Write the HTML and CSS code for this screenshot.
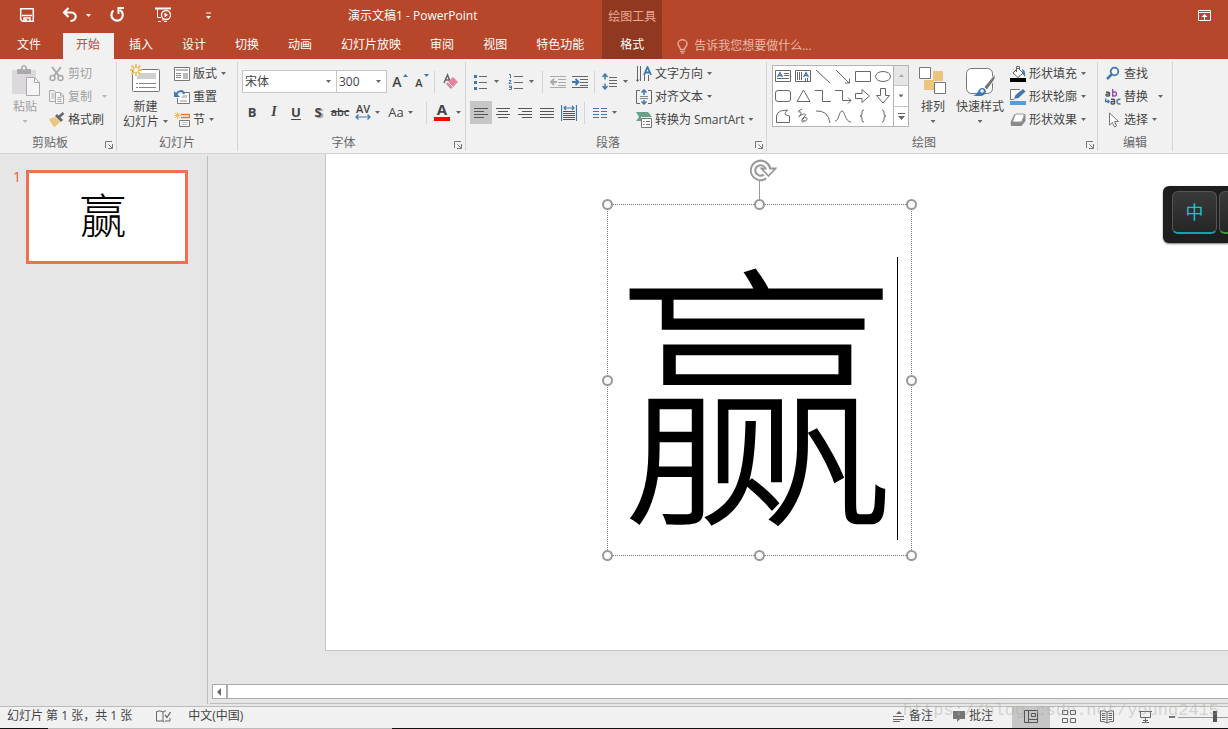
FILE: index.html
```html
<!DOCTYPE html>
<html lang="zh-CN">
<head>
<meta charset="utf-8">
<title>演示文稿1 - PowerPoint</title>
<link rel="stylesheet" href="styles.css">
</head>
<body>
<header class="top">
  <div class="top-main">
    <div class="titlebar">
      <button class="qat save" aria-label="保存"><svg width="16" height="16" viewBox="0 0 16 16"><path d="M1.700 1.700h12.600v12.600H3.500l-1.800-1.800z" fill="none" stroke="#fff" stroke-width="1.500"/><path d="M3 8.500h10M5 15v-4h6v4" fill="none" stroke="#fff" stroke-width="1.500"/><path d="M6 12h2v3H6z" fill="#fff"/></svg></button>
      <button class="qat undo" aria-label="撤消"><svg width="16" height="16" viewBox="0 0 16 16"><path d="M6.500 1L2 5.500 6.500 10M2 5.500h7.500c6 .5 5.500 8-1 8.500" fill="none" stroke="#fff" stroke-width="2.200"/></svg></button>
      <button class="qat undo-more" aria-label="撤消列表"><svg width="5" height="3"><path d="M0 0h5L2.500 3z" fill="#fff"/></svg></button>
      <button class="qat redo" aria-label="重复"><svg width="16" height="16" viewBox="0 0 16 16"><path d="M4.500 3.500A5.700 5.700 0 1 0 11 3" fill="none" stroke="#fff" stroke-width="2.200"/><path d="M9.500 7V1H15" fill="none" stroke="#fff" stroke-width="2"/></svg></button>
      <button class="qat show" aria-label="放映"><svg width="17" height="16" viewBox="0 0 17 16"><path d="M0 1.500h16" stroke="#fff" stroke-width="2"/><path d="M2.500 2v8.500H6M8 11v3M3 14.500h3M9 14.500h3" fill="none" stroke="#fff"/><circle cx="11" cy="8" r="4.500" fill="none" stroke="#fff" stroke-width="1.300"/><path d="M9.500 5.500L13 8l-3.500 2.500z" fill="#fff"/></svg></button>
      <button class="qat custom" aria-label="自定义"><svg width="5" height="7"><path d="M0 1h5" stroke="#fff"/><path d="M0 4h5L2.500 7z" fill="#fff"/></svg></button>
      <h1 class="title">演示文稿1 - PowerPoint</h1>
    </div>
    <nav class="tabs">
      <button class="tab file">文件</button>
      <button class="tab active">开始</button>
      <button class="tab">插入</button>
      <button class="tab">设计</button>
      <button class="tab">切换</button>
      <button class="tab">动画</button>
      <button class="tab">幻灯片放映</button>
      <button class="tab">审阅</button>
      <button class="tab">视图</button>
      <button class="tab">特色功能</button>
    </nav>
  </div>
  <div class="context">
    <span class="context-name">绘图工具</span>
    <button class="tab">格式</button>
  </div>
  <div class="top-right">
    <button class="ribbon-toggle" aria-label="功能区显示选项"><svg width="13" height="11" viewBox="0 0 13 11"><path d="M.5.5h12v10H.5zM1 2.500h11M6.500 10V5" fill="none" stroke="#fff"/><path d="M3.500 7L6.500 4l3 3z" fill="#fff"/></svg></button>
    <button class="tellme"><svg width="11" height="15" viewBox="0 0 11 15"><path d="M3.500 10.500C3.500 8 1 7.500 1 4.800a4.500 4 0 0 1 9 0C10 7.500 7.500 8 7.500 10.500z" fill="none" stroke="#e6a898" stroke-width="1.500"/><path d="M3 12.500h5M4 14.200h3" stroke="#e6a898" stroke-width="1.200"/></svg><span>告诉我您想要做什么...</span></button>
  </div>
</header>

<section class="ribbon">
  <div class="group g-clip">
    <div class="tools">
      <button class="big paste off"><svg width="32" height="33" viewBox="-2 0 32 33"><path d="M1 5h24v24H1z" fill="#dcd8dc"/><path d="M6 4h4V2q3-4 6 0v2h4v5H6z" fill="#aaa"/><circle cx="13" cy="3" r="1.500" fill="#f1f1f1"/><path d="M15.500 12.500h8l5 5v13h-13z" fill="#f6f4f6" stroke="#aaa"/><path d="M23.500 12.500v5h5" fill="none" stroke="#aaa"/></svg><span>粘贴</span><i class="caret"></i></button>
      <div class="stack">
        <button class="small off"><svg width="16" height="16" viewBox="0 0 16 16"><path d="M3 1l7.500 9.500M12 1L4.500 10.500" stroke="#aaa" stroke-width="2"/><circle cx="3.500" cy="12" r="2.500" fill="none" stroke="#aaa" stroke-width="1.500"/><circle cx="11.500" cy="12" r="2.500" fill="none" stroke="#aaa" stroke-width="1.500"/></svg><span>剪切</span></button>
        <button class="small off wide-caret"><svg width="16" height="16" viewBox="0 0 16 16"><path d="M6 12.500H.5v-11H5l3 3M2.500 5h3M2.500 7h3M2.500 9h3" fill="none" stroke="#aaa"/><path d="M6.500 3.500h5l3 3v8h-8z" fill="#f6f4f6" stroke="#aaa"/><path d="M8.500 8.500h4M8.500 10.500h4M8.500 12.500h4M11.500 4v3h3" fill="none" stroke="#aaa"/></svg><span>复制</span><i class="caret"></i></button>
        <button class="small"><svg width="16" height="16" viewBox="0 0 16 16"><path d="M0 7l6-2 5 5-5 5q-3-1-6-8z" fill="#ecc57f"/><path d="M6 4l2-2 6 6-2 2z" fill="#666"/><path d="M10 5l4.500-4" stroke="#666" stroke-width="2.500"/></svg><span>格式刷</span></button>
      </div>
    </div>
    <div class="caption"><span>剪贴板</span><button class="launch" aria-label="剪贴板选项"><svg width="8" height="8"><path d="M.5 7V.5H7M3.500 3.500L7 7M7.500 3v4.500H3" fill="none" stroke="#777"/></svg></button></div>
  </div>

  <div class="group g-slides">
    <div class="tools">
      <button class="big"><svg width="32" height="31" viewBox="1 0 32 31"><rect x="3.500" y="5.500" width="27" height="22" rx="1" fill="#fff" stroke="#777"/><path d="M12 9h15v6H8v-3z" fill="#d0d0d0"/><path d="M7 19.500h2M10 19.500h17M7 23.500h2M10 23.500h17" stroke="#888"/><path d="M7 0v12M1 6h12M2.500 1.500l9 9M11.500 1.500l-9 9" stroke="#eabf68" stroke-width="1.800"/><circle cx="7" cy="6" r="2" fill="#fff"/></svg><span>新建</span><span class="with-caret">幻灯片<i class="caret"></i></span></button>
      <div class="stack">
        <button class="small"><svg width="16" height="16" viewBox="0 0 16 16"><path d="M.5 1.500h15v13H.5z" fill="#fff" stroke="#777"/><path d="M2 3h12v2H2zM9 7h5v6H9z" fill="#bbb"/><path d="M2 7.500h5M2 9.500h5M2 11.500h5" stroke="#888"/></svg><span>版式</span><i class="caret"></i></button>
        <button class="small"><svg width="16" height="16" viewBox="0 0 16 16"><path d="M9 3.500h6.500v11h-12V9" fill="#fff" stroke="#777"/><path d="M9 6h4v3H7zM6 11h7v2H6z" fill="#c8c8c8"/><path d="M2 6c2-5 7-5 8-1" fill="none" stroke="#3f78b0" stroke-width="2"/><path d="M0 2v6h6z" fill="#3f78b0"/></svg><span>重置</span></button>
        <button class="small"><svg width="16" height="16" viewBox="0 0 16 16"><path d="M7 2.500h8.500M7 5.500h8.500v-3" fill="none" stroke="#e07b39" stroke-width="1.500"/><path d="M5.500 8.500h10v6h-10z" fill="#fff" stroke="#777"/><path d="M7.500 10.500h6M7.500 12.500h6" stroke="#bbb"/><path d="M3.500 0v7M0 3.500h7M1 1l5 5M6 1L1 6" stroke="#eabf68"/></svg><span>节</span><i class="caret"></i></button>
      </div>
    </div>
    <div class="caption"><span>幻灯片</span></div>
  </div>

  <div class="group g-font">
    <div class="tools rows">
      <div class="row">
        <label class="combo name"><select aria-label="字体"><option>宋体</option></select><i class="caret"></i></label>
        <label class="combo size"><select aria-label="字号"><option>300</option></select><i class="caret"></i></label>
        <button class="ico grow" aria-label="增大字号"><span>A</span><svg width="5" height="3"><path d="M0 3h5L2.500 0z" fill="#3f78b0"/></svg></button>
        <button class="ico shrink" aria-label="减小字号"><span>A</span><svg width="5" height="3"><path d="M0 0h5L2.500 3z" fill="#3f78b0"/></svg></button>
        <i class="bar"></i>
        <button class="ico eraser" aria-label="清除格式"><svg width="16" height="18" viewBox="0 0 16 18"><path d="M1 10L4.500 2 7 8M2.500 7H6" fill="none" stroke="#666" stroke-width="1.500"/><path d="M10 4l5 5-7 7-5-5z" fill="#e8849a"/><path d="M5 9l5 5" stroke="#f1f1f1"/></svg></button>
      </div>
      <div class="row format">
        <button class="ico b">B</button>
        <button class="ico i">I</button>
        <button class="ico u">U</button>
        <button class="ico s">S</button>
        <button class="ico strike">abc</button>
        <button class="ico av" aria-label="字符间距"><span>AV</span><svg width="16" height="6" viewBox="0 0 16 6"><path d="M1 3h14M3.500.5L1 3l2.500 2.500M12.500.5L15 3l-2.500 2.500" fill="none" stroke="#3f78b0" stroke-width="1.200"/></svg></button>
        <i class="caret"></i>
        <button class="ico aa">Aa</button>
        <i class="caret"></i>
        <i class="bar"></i>
        <button class="ico color" aria-label="字体颜色"><span>A</span></button>
        <i class="caret"></i>
      </div>
    </div>
    <div class="caption"><span>字体</span><button class="launch" aria-label="字体选项"><svg width="8" height="8"><path d="M.5 7V.5H7M3.500 3.500L7 7M7.500 3v4.500H3" fill="none" stroke="#777"/></svg></button></div>
  </div>

  <div class="group g-para">
    <div class="tools">
      <div class="rows">
        <div class="row lists">
          <button class="ico" aria-label="项目符号"><svg width="16" height="16" viewBox="0 0 16 16"><path d="M6 2.500h8M6 8.500h8M6 14.500h8" stroke="#666"/><path d="M1 1h3v3H1zM1 7h3v3H1zM1 13h3v3H1z" fill="#3f78b0"/></svg></button><i class="caret"></i>
          <button class="ico" aria-label="编号"><svg width="16" height="16" viewBox="0 0 16 16"><path d="M6 2.500h9M6 8.500h9M6 14.500h9" stroke="#666"/><path d="M1 .5h1.500v3.500M1 6.500h2L1 9.500h2.500M1 12h2.500v1.500H1.500 3.500v2H1" fill="none" stroke="#3f78b0"/></svg></button><i class="caret"></i>
          <i class="bar"></i>
          <button class="ico" aria-label="减少缩进"><svg width="17" height="14" viewBox="0 0 17 14"><path d="M0 1.500h16M8 4.500h8M8 7.500h8M0 12.500h16M8 10.500h8" stroke="#aaa"/><path d="M1 7h6M4 4L1 7l3 3" fill="none" stroke="#aaa" stroke-width="1.800"/></svg></button>
          <button class="ico" aria-label="增加缩进"><svg width="17" height="14" viewBox="0 0 17 14"><path d="M0 1.500h16M8 4.500h8M8 7.500h8M0 12.500h16M8 10.500h8" stroke="#666"/><path d="M0 7h6M3.500 4l3 3-3 3" fill="none" stroke="#3f78b0" stroke-width="1.800"/></svg></button>
          <i class="bar"></i>
          <button class="ico" aria-label="行距"><svg width="16" height="17" viewBox="0 0 16 17"><path d="M7 4.500h8M7 7.500h8M7 10.500h8M7 13.500h8" stroke="#666"/><path d="M3 1.500v5M.5 4L3 1l2.500 3M3 15.500v-5M.5 13L3 16l2.500-3" fill="none" stroke="#3f78b0" stroke-width="1.500"/></svg></button><i class="caret"></i>
        </div>
        <div class="row aligns">
          <button class="ico on" aria-label="左对齐"><svg width="14" height="12"><path d="M0 1.500h14M0 4.500h10M0 7.500h14M0 10.500h10" stroke="#555"/></svg></button>
          <button class="ico" aria-label="居中"><svg width="14" height="12"><path d="M0 1.500h14M2 4.500h10M0 7.500h14M2 10.500h10" stroke="#555"/></svg></button>
          <button class="ico" aria-label="右对齐"><svg width="14" height="12"><path d="M0 1.500h14M4 4.500h10M0 7.500h14M4 10.500h10" stroke="#555"/></svg></button>
          <button class="ico" aria-label="两端对齐"><svg width="14" height="12"><path d="M0 1.500h14M0 4.500h14M0 7.500h14M0 10.500h14" stroke="#555"/></svg></button>
          <button class="ico" aria-label="分散对齐"><svg width="16" height="16" viewBox="0 0 16 16"><path d="M.5 0v16M15.500 0v16M3 3h10M5 1L3 3l2 2M11 1l2 2-2 2" fill="none" stroke="#3f78b0" stroke-width="1.200"/><path d="M2 6.500h12M2 8.500h12M2 10.500h12M2 12.500h12M2 14.500h12" stroke="#555"/></svg></button>
          <i class="bar"></i>
          <button class="ico" aria-label="分栏"><svg width="14" height="12"><path d="M0 1.500h6M0 4.500h6M0 7.500h6M0 10.500h6M8 1.500h6M8 4.500h6M8 7.500h6M8 10.500h6" stroke="#3f78b0"/></svg></button><i class="caret"></i>
        </div>
      </div>
      <div class="stack">
        <button class="small"><svg width="16" height="16" viewBox="0 0 16 16"><path d="M1.500 0v15M4.500 0v15M8.500 9v6M12.500 9v6M0 13.500l1.500 2 1.500-2" fill="none" stroke="#666"/><path d="M8 9l3.500-8L15 9M9 6.500h5" fill="none" stroke="#3f78b0" stroke-width="1.800"/></svg><span>文字方向</span><i class="caret"></i></button>
        <button class="small"><svg width="16" height="16" viewBox="0 0 16 16"><path d="M4 1.500H.5v13H4M12 1.500h3.500v13H12" fill="none" stroke="#666"/><path d="M4 7.500h8M4 9.500h8" stroke="#888"/><path d="M8 1v5M5.500 3.500L8 1l2.500 2.500M8 15v-4M5.500 12.500L8 15l2.500-2.500" fill="none" stroke="#3f78b0" stroke-width="1.500"/></svg><span>对齐文本</span><i class="caret"></i></button>
        <button class="small"><svg width="16" height="16" viewBox="0 0 16 16"><path d="M0 0h12l4 5H5v4H0l3-4z" fill="#69a28c"/><path d="M5.500 6.500h10v9h-10z" fill="#fff" stroke="#777"/><path d="M7 9.500h1.500M10 9.500h4M7 12.500h1.500M10 12.500h4" stroke="#777"/></svg><span>转换为 SmartArt</span><i class="caret"></i></button>
      </div>
    </div>
    <div class="caption"><span>段落</span><button class="launch" aria-label="段落选项"><svg width="8" height="8"><path d="M.5 7V.5H7M3.500 3.500L7 7M7.500 3v4.500H3" fill="none" stroke="#777"/></svg></button></div>
  </div>

  <div class="group g-draw">
    <div class="tools">
      <div class="gallery">
        <div class="shapes">
          <button aria-label="文本框"><svg viewBox="0 0 20 20"><path d="M2.500 4.500h15v11h-15zM11 7.500h5M11 9.500h5M4 12.500h12"/><path class="blue" d="M4.500 11L7 6.500 9.500 11M5.500 9.500h3"/></svg></button>
          <button aria-label="竖排文本框"><svg viewBox="0 0 20 20"><path d="M2.500 4.500h15v11h-15zM4.500 6v8M6.500 6v8M8.500 6v8M12.500 12v3M14.500 12v3"/><path class="blue" d="M10.500 11L13 6.500l2.500 4.500M11.500 9.500h3"/></svg></button>
          <button aria-label="直线"><svg viewBox="0 0 20 20"><path d="M3 4l14 13"/></svg></button>
          <button aria-label="箭头"><svg viewBox="0 0 20 20"><path d="M3 4l13 13M16.500 12.500v4.500H12"/></svg></button>
          <button aria-label="矩形"><svg viewBox="0 0 20 20"><path d="M2.500 5.500h15v10h-15z"/></svg></button>
          <button aria-label="椭圆"><svg viewBox="0 0 20 20"><ellipse cx="10" cy="10.500" rx="7.500" ry="5"/></svg></button>
          <button aria-label="圆角矩形"><svg viewBox="0 0 20 20"><rect x="2.500" y="4.500" width="15" height="11" rx="2.500"/></svg></button>
          <button aria-label="三角形"><svg viewBox="0 0 20 20"><path d="M4 15.500h13L10.500 4z"/></svg></button>
          <button aria-label="肘形连接符"><svg viewBox="0 0 20 20"><path d="M2 4.500h7.500v11H18"/></svg></button>
          <button aria-label="肘形箭头"><svg viewBox="0 0 20 20"><path d="M2 4.500h7.500v10H18M15 11.500l3 3-3 3"/></svg></button>
          <button aria-label="右箭头"><svg viewBox="0 0 20 20"><path d="M2.500 7.500H9V3.500l7.500 6.500L9 16.500v-4H2.500z"/></svg></button>
          <button aria-label="下箭头"><svg viewBox="0 0 20 20"><path d="M7.500 2.500v7H3.500L10 17l6.500-7.500h-4v-7z"/></svg></button>
          <button aria-label="任意多边形"><svg viewBox="0 0 20 20"><path d="M3.500 16.500V10q0-3 4-5l7-1q-5 5 0 5.500l2 .5v6.500z"/></svg></button>
          <button aria-label="自由曲线"><svg viewBox="0 0 20 20"><path d="M9 3c-9 5 1 1-1 5s-4 3 0 1 6-1 3 2-1 3 0 4-3 2-2-1 6-3 5-1-1 3-3 1"/></svg></button>
          <button aria-label="弧形"><svg viewBox="0 0 20 20"><path d="M3 5q12-1 14 12"/></svg></button>
          <button aria-label="曲线"><svg viewBox="0 0 20 20"><path d="M2 15c4 0 4-10 7-10s3 11 9 11"/></svg></button>
          <button aria-label="左大括号"><svg viewBox="0 0 20 20"><path d="M11 4q-2 0-2 2v2q0 2-2 2 2 0 2 2v2q0 2 2 2"/></svg></button>
          <button aria-label="右大括号"><svg viewBox="0 0 20 20"><path d="M9 4q2 0 2 2v2q0 2 2 2-2 0-2 2v2q0 2-2 2"/></svg></button>
        </div>
        <div class="scroller">
          <button class="dim" aria-label="上一行"><svg width="5" height="3"><path d="M0 3h5L2.500 0z" fill="#aaa"/></svg></button>
          <button aria-label="下一行"><i class="caret"></i></button>
          <button aria-label="其他"><svg width="7" height="7"><path d="M0 .5h7" stroke="#666"/><path d="M0 3h7L3.500 7z" fill="#666"/></svg></button>
        </div>
      </div>
      <button class="big arrange"><svg width="28" height="33" viewBox="0 0 28 33"><path d="M14 6h10v10H14zM5 15h10v10H5z" fill="#ecc57f"/><path d="M.5 2.500h11v11H.5zM15.500 17.500h11v11h-11z" fill="#fff" stroke="#777"/></svg><span>排列</span><i class="caret"></i></button>
      <button class="big quick"><svg width="30" height="33" viewBox="-1 0 30 33"><rect x=".5" y="3.500" width="26" height="25" rx="5" fill="#fff" stroke="#777"/><path d="M29 9L18 22l3 3 8-11z" fill="#777" stroke="#f1f1f1"/><path d="M7 31c5-1 5-8 9-8 6 0 5 8-2 8z" fill="#3f78b0"/><circle cx="16" cy="26" r="1.800" fill="#fff"/></svg><span>快速样式</span><i class="caret"></i></button>
      <div class="stack">
        <button class="small"><svg width="16" height="16" viewBox="0 0 16 16"><path d="M3 7l5-5 5 5-5 4.500z" fill="#fff" stroke="#666"/><path d="M6.500 6V.5h3V4" fill="none" stroke="#666"/><path d="M12 3q4 1 3 8l-2-3z" fill="#3f78b0"/><path d="M0 12h16v4H0z"/></svg><span>形状填充</span><i class="caret"></i></button>
        <button class="small"><svg width="16" height="16" viewBox="0 0 16 16"><path d="M10 .5H.5v10H4" fill="#fff" stroke="#777"/><path d="M4 10l1.500-4L13 0l2.500 2.500-7 6.500z" fill="#3f78b0"/><path d="M0 12h16v4H0z" fill="#5b9bd5"/></svg><span>形状轮廓</span><i class="caret"></i></button>
        <button class="small"><svg width="16" height="16" viewBox="0 0 16 16"><path d="M1 9L4 3q.5-1 2-1h8q2 0 1.500 2v5l-4 5H2q-2 0-1-5z" fill="#8a8a8a"/><path d="M6 2h7q2 0 1 2l-2 5q-.5 1-2 1H4q-2 0-1-2l2-5z" fill="#fff" stroke="#999"/></svg><span>形状效果</span><i class="caret"></i></button>
      </div>
    </div>
    <div class="caption"><span>绘图</span><button class="launch" aria-label="绘图选项"><svg width="8" height="8"><path d="M.5 7V.5H7M3.500 3.500L7 7M7.500 3v4.500H3" fill="none" stroke="#777"/></svg></button></div>
  </div>

  <div class="group g-edit">
    <div class="tools">
      <div class="stack">
        <button class="small"><svg width="16" height="16" viewBox="0 0 16 16"><circle cx="9.500" cy="5.500" r="3.800" fill="#fff" stroke="#3f78b0" stroke-width="1.800"/><path d="M6.500 8.500L2 13" stroke="#3f78b0" stroke-width="2.500"/></svg><span>查找</span></button>
        <button class="small wide-caret"><svg width="16" height="16" viewBox="0 0 16 16" fill="none" stroke="#555" stroke-width="1.400"><path d="M1 3.200h2.500q1 0 1 1V7M4.500 5H2.500Q1 5 1 6t1.200 1H4.500"/><path d="M7.700 0v7h1.800q2 0 2-2t-2-2H7.700" stroke="#8c50b0"/><path d="M6 10.200h2.500q1 0 1 1V15M9.500 12.500h-2q-1.500 0-1.500 1.200T7.200 15h2.300"/><path d="M15.500 10.200h-1.200q-2.300 0-2.300 2.400t2.300 2.400h1.200M.7 9.500v3h3.500M2.700 11l1.500 1.500L2.700 14" stroke="#3f78b0"/></svg><span>替换</span><i class="caret"></i></button>
        <button class="small"><svg width="16" height="16" viewBox="0 0 16 16"><path d="M4.500 1v12l3-2.500 2 4.500 2-1-2-4.500h4z" fill="#fff" stroke="#777"/></svg><span>选择</span><i class="caret"></i></button>
      </div>
    </div>
    <div class="caption"><span>编辑</span></div>
  </div>
</section>

<main class="work">
  <aside class="thumbs">
    <span class="num">1</span>
    <button class="thumb" aria-label="幻灯片 1">赢</button>
  </aside>
  <section class="editor">
    <div class="stage">
      <div class="slide">
        <div class="textbox">
          <span class="word">赢</span><i class="cursor"></i>
          <i class="stem"></i>
          <svg class="rotate" width="28" height="24" viewBox="0 0 28 24"><path d="M15 18.500A7.500 7.500 0 1 1 18 11" fill="none" stroke="#999" stroke-width="6.500"/><path d="M11.500 10.500h14l-7 7.500z" fill="#fff" stroke="#999" stroke-width="1.800"/><path d="M15 18.500A7.500 7.500 0 1 1 18 12" fill="none" stroke="#fff" stroke-width="2.500"/></svg>
          <i class="handle nw"></i><i class="handle n"></i><i class="handle ne"></i>
          <i class="handle w"></i><i class="handle e"></i>
          <i class="handle sw"></i><i class="handle s"></i><i class="handle se"></i>
        </div>
      </div>
    </div>
    <div class="hscroll"><button aria-label="向左滚动"><svg width="4" height="8"><path d="M4 0v8L0 4z" fill="#666"/></svg></button><div class="track"></div></div>
  </section>
  <div class="ime"><span class="key">中</span><span class="key next"></span></div>
</main>

<footer class="status">
  <span>幻灯片 第 1 张，共 1 张</span>
  <button class="spell" aria-label="拼写检查"><svg width="15" height="13" viewBox="0 0 15 13"><path d="M7 11.500V2Q4 0 .5 1.500v9.500h6.500l1 1.500M7 2q1-1 3-1M14 8v3H9" fill="none" stroke="#666"/><path d="M9 5l2 2.500L14.500 2" fill="none" stroke="#666" stroke-width="1.300"/></svg></button>
  <button>中文(中国)</button>
  <div class="views">
    <button class="notes"><svg width="12" height="12" viewBox="0 0 12 12"><path d="M3 4h6L6 1z" fill="#666"/><path d="M0 6.500h11M0 9.500h11M0 11.500h7" stroke="#666"/></svg><span>备注</span></button>
    <button class="comments"><svg width="12" height="12" viewBox="0 0 12 12"><path d="M0 1h12v8H7l-3 3V9H0z" fill="#777"/></svg><span>批注</span></button>
    <button class="view on" aria-label="普通视图"><svg width="15" height="13" viewBox="0 0 15 13"><path d="M.5.500h13v12H.5zM4.500 1v11M5 9.500h9M7.500 3.500h4v3h-4z" fill="none" stroke="#555"/></svg></button>
    <button class="view" aria-label="浏览视图"><svg width="15" height="13" viewBox="0 0 15 13"><path d="M.5.500h5v4h-5zM8.500.500h5v4h-5zM.5 8.500h5v4h-5zM8.500 8.500h5v4h-5z" fill="none" stroke="#666"/></svg></button>
    <button class="view" aria-label="阅读视图"><svg width="15" height="14" viewBox="0 0 15 14"><path d="M7 2Q4 0 .5 1v10.500Q4 11 7 13q3-2 6.500-1.500V1Q10 0 7 2v11M2 3.500h3.500M2 5.500h3.500M2 7.500h3.500M2 9.500h3.500M8.500 3.500H12M8.500 5.500H12M8.500 7.500H12M8.500 9.500H12" fill="none" stroke="#666"/></svg></button>
    <button class="view" aria-label="幻灯片放映"><svg width="13" height="13" viewBox="0 0 13 13"><path d="M0 1.500h13M1.500 2v5.500h10V2M6.500 8v4M3 12.500h7M4 10.500h5" fill="none" stroke="#666"/></svg></button>
    <button class="minus" aria-label="缩小"></button>
    <input class="zoom" type="range" aria-label="缩放" value="100">
  </div>
  <span class="watermark">https://blog.csdn.net/young2415</span>
</footer>
<div class="edge"></div>
</body>
</html>
```

FILE: styles.css
```css
* { box-sizing: border-box; }
body {
  margin: 0;
  height: 100vh;
  display: flex;
  flex-direction: column;
  overflow: hidden;
  background: #e6e6e6;
  color: #444;
  font: 12px/16px "Open Sans", "Noto Sans CJK SC", sans-serif;
}
button {
  margin: 0;
  padding: 0;
  border: 0;
  background: none;
  color: inherit;
  font: inherit;
  white-space: nowrap;
}
svg { display: block; flex: none; }
i { font-style: normal; }

.caret {
  flex: none;
  display: block;
  width: 5px;
  height: 3px;
  background: #666;
  clip-path: polygon(0 0, 100% 0, 50% 100%);
}

/* title and tabs */
.top { display: flex; height: 59px; background: #b7472a; color: #fff; }
.top-main { display: flex; flex-direction: column; padding-right: 4px; }
.titlebar { display: flex; align-items: center; height: 33px; padding: 0 0 3px 19px; }
.undo { margin-left: 27px; }
.undo-more { margin-left: 8px; }
.redo { margin-left: 18px; }
.show { margin-left: 30px; }
.custom { margin-left: 34px; }
.title { margin: 0 0 0 137px; padding-top: 2px; font-size: 12px; font-weight: 400; }
.tabs { display: flex; gap: 1px; height: 26px; }
.tab { height: 26px; padding: 0 14px 3px; }
.file { padding: 0 21px 3px 17px; }
.active { padding-left: 13px; background: #f1f1f1; color: #c8462a; }
.context { width: 60px; display: flex; flex-direction: column; align-items: center; background: #903820; }
.context-name { height: 33px; padding-top: 9px; color: #eda793; }
.top-right { flex: 1; display: flex; flex-direction: column; align-items: flex-start; }
.ribbon-toggle { align-self: flex-end; height: 33px; padding: 0 17px 3px 0; }
.tellme { display: flex; align-items: center; gap: 6px; height: 26px; padding-left: 15px; color: #e9b9ac; }

/* ribbon */
.ribbon { display: flex; height: 95px; padding: 3px 0 2px; background: #f1f1f1; border-bottom: 1px solid #d2d2d2; }
.group { display: flex; flex-direction: column; justify-content: space-between; border-right: 1px solid #d4d4d4; }
.g-clip { width: 117px; }
.g-slides { width: 121px; }
.g-font { width: 228px; }
.g-para { width: 301px; }
.g-draw { width: 331px; }
.g-edit { width: 75px; }
.tools { display: flex; align-items: flex-start; height: 70px; }
.caption { position: relative; text-align: center; color: #666; padding-right: 16px; height: 16px; }
.g-slides .caption, .g-edit .caption { padding-right: 0; }
.launch { position: absolute; right: 3px; bottom: 2px; }

.stack { display: flex; flex-direction: column; }
.small { display: flex; align-items: center; gap: 3px; height: 23px; }
.small .caret { margin-left: 1px; }
.small.wide-caret .caret { margin-left: 7px; }
.big { display: flex; flex-direction: column; align-items: center; line-height: 15px; padding-top: 3px; }
.big svg { margin-bottom: 1px; }
.big > .caret { margin-top: 6px; }
.with-caret { display: flex; align-items: center; gap: 4px; }
.off { color: #a0a0a0; }
.off .caret { background: #b8b8b8; }

.g-clip .tools { padding-left: 9px; }
.g-clip .stack { margin-left: 8px; }
.g-slides .tools { padding-left: 6px; }
.g-slides .big { padding-top: 2px; }
.g-slides .big svg { margin-bottom: 4px; }
.g-slides .stack { margin-left: 6px; }

.rows { display: flex; flex-direction: column; gap: 8px; padding-top: 8px; }
.row { display: flex; align-items: center; height: 23px; }
.bar { display: block; width: 1px; height: 22px; background: #d4d4d4; }
.ico { display: flex; align-items: center; justify-content: center; width: 22px; height: 23px; flex: none; }
.g-font .rows { padding-left: 4px; }
.combo { position: relative; display: flex; height: 23px; border: 1px solid #c6c6c6; background: #fff; }
.combo + .combo { margin-left: -1px; }
.combo.name { width: 95px; }
.combo.size { width: 51px; }
.combo select { appearance: none; width: 100%; padding: 0 0 0 2px; border: 0; background: none; color: #444; font: inherit; }
.combo .caret { position: absolute; right: 5px; top: 9px; }
.grow, .shrink { align-items: flex-start; gap: 1px; }
.grow { font-size: 14px; line-height: 24px; font-weight: 600; margin-left: 2px; }
.shrink { font-size: 11px; line-height: 26px; font-weight: 600; }
.grow svg, .shrink svg { margin-top: 4px; }
.g-font .row > .bar { margin-left: 1px; }
.eraser { margin-left: 5px; }
.format { font-size: 13px; font-weight: 700; }
.format .ico { color: #444; padding-bottom: 2px; }
.b { margin-left: -1px; }
.i { font: italic 700 14px "Liberation Serif", serif; }
.u { text-decoration: underline; text-underline-offset: 2px; }
.s { text-shadow: 2px 1px 1px #999; }
.strike { font-size: 11px; text-decoration: line-through; font-weight: 600; }
.format .av { flex-direction: column; width: 24px; font-size: 11px; line-height: 11px; font-weight: 600; }
.aa { margin-left: 5px; font-weight: 400; }
.aa + .caret { margin-left: 1px; }
.format > .bar.bar { margin: 0 4px 0 13px; }
.color { font-size: 15px; line-height: 15px; }
.color span { border-bottom: 4px solid #f00; width: 16px; }
.color + .caret { margin-left: 3px; }

.g-para .tools > .rows { padding-left: 4px; width: 166px; }
.lists .ico + .caret { margin-left: 2px; }
.lists .caret + .ico { margin-left: 6px; }
.lists .bar { margin: 0 4px 0 8px; }
.lists .bar ~ .bar { margin: 0 4px 0 3px; }
.on { background: #c6c6c6; }
.aligns .bar { margin: 0 4px; }
.aligns .caret { margin-left: 1px; }
.g-para .stack { margin-left: 4px; }

.g-draw .tools { padding-left: 5px; }
.gallery { display: flex; margin-top: 3px; height: 62px; border: 1px solid #b4b4b4; background: #fff; }
.shapes { display: grid; grid-template-columns: repeat(6, 20px); grid-template-rows: repeat(3, 20px); }
.shapes svg { width: 20px; height: 20px; fill: none; stroke: #666; }
.shapes .blue { stroke: #3f78b0; stroke-width: 1.3; }
.scroller { display: flex; flex-direction: column; width: 15px; border-left: 1px solid #b4b4b4; }
.scroller button { flex: 1; display: flex; align-items: center; justify-content: center; }
.scroller button + button { border-top: 1px solid #c6c6c6; }
.dim { background: #e6e6e6; }
.arrange { margin-left: 10px; }
.quick { margin-left: 9px; }
.g-draw .stack { margin-left: 6px; }
.g-edit .tools { padding-left: 7px; }

/* work area */
.work { position: relative; flex: 1; min-height: 0; display: flex; }
.thumbs { width: 208px; margin: 2px 0; padding: 14px 0 0 13px; display: flex; align-items: flex-start; gap: 5px; border-right: 1px solid #bcbcbc; }
.num { width: 8px; font-size: 14px; line-height: 14px; color: #d9603f; }
.thumb {
  width: 162px;
  height: 94px;
  padding: 0 8px 4px 0;
  border: 3px solid #f07152;
  background: #fff;
  color: #000;
  font-size: 47px;
  line-height: 70px;
  font-weight: 300;
}
.editor { flex: 1; min-width: 0; display: flex; flex-direction: column; }
.stage { flex: 1; padding: 0 0 33px 117px; }
.slide { position: relative; height: 100%; background: #fff; border: solid #c6c6c6; border-width: 0 0 1px 1px; }
.textbox {
  position: absolute;
  left: 281px;
  top: 50px;
  width: 305px;
  height: 352px;
  padding: 37px 0 0 9px;
  display: flex;
  border: 1px dotted #777;
  color: #000;
}
.word { font: 300 280px/283px "Noto Sans CJK SC", sans-serif; }
.cursor { width: 1px; height: 283px; margin-top: 15px; background: #000; flex: none; }
.stem { position: absolute; left: 151px; top: -26px; width: 1px; height: 22px; background: #999; }
.rotate { position: absolute; left: 142px; top: -47px; }
.handle { position: absolute; width: 11px; height: 11px; border: 2px solid #999; border-radius: 50%; background: #fff; }
.nw, .w, .sw { left: -6px; }
.n, .s { left: 146px; }
.ne, .e, .se { right: -6px; }
.nw, .n, .ne { top: -6px; }
.w, .e { top: 170px; }
.sw, .s, .se { bottom: -6px; }
.hscroll { display: flex; height: 15px; margin: 0 0 4px 4px; border: 1px solid #ababab; border-right: 0; background: #fff; }
.hscroll button { width: 15px; padding-left: 4px; border-right: 2px solid #ababab; }
.track { flex: 1; }
.editor::after { content: ""; height: 1px; margin: 0 0 2px 2px; background: #bcbcbc; }
.ime {
  position: absolute;
  right: 0;
  top: 32px;
  width: 65px;
  height: 57px;
  display: flex;
  gap: 2px;
  padding: 5px 0 8px 9px;
  overflow: hidden;
  background: #1e1e1e;
  border-radius: 6px 0 0 6px;
  box-shadow: 0 1px 2px #777;
}
.key {
  flex: none;
  width: 45px;
  height: 43px;
  border-radius: 6px;
  border: 1px solid #555;
  border-bottom: 2px solid #12a5a8;
  background: linear-gradient(#3a3a3a, #262626);
  color: #14c4d0;
  font-size: 18px;
  line-height: 40px;
  text-align: center;
}
.next { border-bottom-color: #3a9a40; }

/* status bar */
.status { position: relative; display: flex; align-items: center; height: 22px; padding: 0 0 3px 7px; background: #f1f1f1; border-top: 1px solid #bcbcbc; }
.spell { margin: 0 17px 0 24px; }
.views { margin-left: auto; display: flex; align-items: center; align-self: stretch; margin-bottom: -3px; }
.notes, .comments { display: flex; align-items: center; gap: 4px; padding-bottom: 3px; }
.comments { margin: 0 19px 0 20px; }
.view { width: 38px; display: flex; align-items: center; justify-content: center; align-self: stretch; padding-bottom: 2px; }
.minus { width: 6px; height: 2px; margin: 0 3px 2px 5px; background: #666; }
.zoom { appearance: none; width: 50px; height: 12px; margin: 0 0 2px; background: linear-gradient(#999, #999) 0 6px / 100% 1px no-repeat; padding-right: 11px; }
.zoom::-webkit-slider-thumb { appearance: none; width: 4px; height: 11px; background: #555; }
.watermark { position: absolute; right: 9px; bottom: 8px; color: #a8aaa070; font: 17px/18px "Liberation Mono", monospace; }
.edge { height: 1px; background: linear-gradient(90deg, #111 48px, #bcbcbc 48px 392px, #111 392px); }
```
